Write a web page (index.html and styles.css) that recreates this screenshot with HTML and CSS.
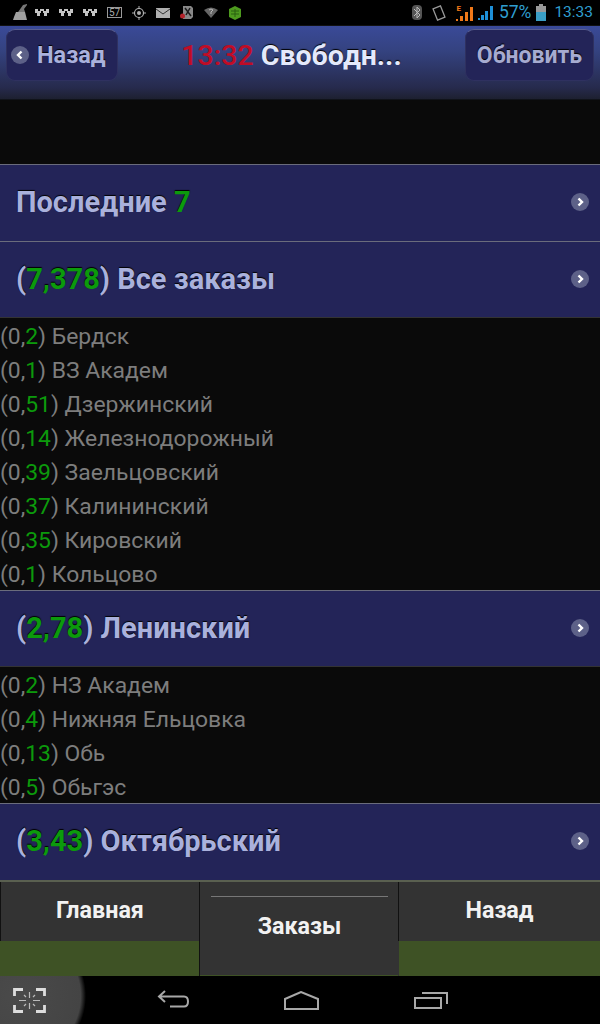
FILE: index.html
```html
<!DOCTYPE html>
<html lang="ru">
<head>
<meta charset="utf-8">
<title>Свободные заказы</title>
<link rel="stylesheet" href="styles.css">
</head>
<body>
<div class="status">
  <div class="status-left">
    <svg class="broom" width="16" height="17" viewBox="0 0 16 17"><path d="M11 1l4-1v1l-3 4 1 3-9 3z" fill="#777"/><path d="M4 8l9 0 2 8H1l1-3z" fill="#a0a0a0"/></svg>
    <svg class="taxi" width="14" height="8" viewBox="0 0 14 8"><path d="M0 0h3v2h2V0h4v2h2V0h3v4h-2v3H9V4H8V2H6v2H5v3H2V4H0z" fill="#c4c4c4"/></svg>
    <svg class="taxi" width="14" height="8" viewBox="0 0 14 8"><path d="M0 0h3v2h2V0h4v2h2V0h3v4h-2v3H9V4H8V2H6v2H5v3H2V4H0z" fill="#c4c4c4"/></svg>
    <svg class="taxi" width="14" height="8" viewBox="0 0 14 8"><path d="M0 0h3v2h2V0h4v2h2V0h3v4h-2v3H9V4H8V2H6v2H5v3H2V4H0z" fill="#c4c4c4"/></svg>
    <span class="cal">57</span>
    <svg width="14" height="14" viewBox="0 0 14 14"><circle cx="7" cy="7" r="4.500" fill="none" stroke="#b0b0b0" stroke-width="1.200"/><circle cx="7" cy="7" r="2" fill="#b0b0b0"/><path d="M7 0v3M7 11v3M0 7h3M11 7h3" stroke="#b0b0b0"/></svg>
    <svg width="14" height="10" viewBox="0 0 14 10"><rect width="14" height="10" fill="#b0b0b0"/><path d="M0 1l7 5 7-5" fill="none" stroke="#333"/></svg>
    <svg width="14" height="13" viewBox="0 0 14 13"><path d="M3 0h8l2 2v9l-2 2H3z" fill="#888"/><path d="M5 2l6 8M10 2l-4 7" stroke="#1a1a1a" stroke-width="1.500"/><circle cx="2.500" cy="10" r="2.500" fill="#b3222a"/></svg>
    <svg width="14" height="11" viewBox="0 0 14 11"><path d="M0 3q7-5 14 0L7 11z" fill="#666"/><path d="M5 3q2-2 4 0l-2 2v2" fill="none" stroke="#bbb"/></svg>
    <svg width="14" height="14" viewBox="0 0 14 14"><path d="M7 0l6 3v8l-6 3-6-3V3z" fill="#4d9a1e"/><path d="M3 5h8M3 8h8M7 3v8" stroke="#2a5e10"/></svg>
  </div>
  <div class="status-right">
    <svg width="10" height="15" viewBox="0 0 10 15"><rect width="10" height="15" rx="4" fill="#555"/><path d="M2 4l6 6-3 3V2l3 3-6 6" fill="none" stroke="#bbb"/></svg>
    <svg class="rot" width="14" height="16" viewBox="0 0 14 16"><rect x="3" y="2" width="8" height="12" fill="none" stroke="#999" stroke-width="1.300" transform="rotate(-22 7 8)"/></svg>
    <span class="sig"><span class="e">E</span><svg width="17" height="14" viewBox="0 0 17 14"><path d="M0 14h2v-2H0zM4 14h3V9H4zM9 14h3V5H9zM14 14h3V0h-3z" fill="#f07818"/></svg></span>
    <svg width="15" height="14" viewBox="0 0 15 14"><path d="M0 14h2v-2H0zM3 14h3V9H3zM7 14h3V5H7zM12 14h3V0h-3z" fill="#1e90d8"/></svg>
    <span class="pct">57%</span>
    <svg width="10" height="17" viewBox="0 0 10 17"><rect x="3" width="4" height="2" fill="#999"/><rect y="2" width="10" height="15" fill="#999"/><rect y="8" width="10" height="9" fill="#3a9ec4"/></svg>
    <span class="clock">13:33</span>
  </div>
</div>

<header class="topbar">
  <div class="btn btn-back">
    <span class="bullet"><svg width="10" height="10" viewBox="0 0 10 10"><path d="M6.500 1.500L3 5l3.500 3.500" fill="none" stroke="#fff" stroke-width="2.400"/></svg></span>
    <span>Назад</span>
  </div>
  <h1 class="title"><span class="red">13:32</span> Свободн...</h1>
  <div class="btn btn-refresh">Обновить</div>
</header>

<div class="spacer"></div>

<main class="content">
  <div class="row row-tall"><span>Последние <b>7</b></span><span class="bullet"><svg width="10" height="10" viewBox="0 0 10 10"><path d="M3.500 1.500L7 5 3.500 8.500" fill="none" stroke="#fff" stroke-width="2.400"/></svg></span></div>
  <div class="row"><span>(<b>7,378</b>) Все заказы</span><span class="bullet"><svg width="10" height="10" viewBox="0 0 10 10"><path d="M3.500 1.500L7 5 3.500 8.500" fill="none" stroke="#fff" stroke-width="2.400"/></svg></span></div>
  <ul class="list">
    <li>(0,<i>2</i>) Бердск</li>
    <li>(0,<i>1</i>) ВЗ Академ</li>
    <li>(0,<i>51</i>) Дзержинский</li>
    <li>(0,<i>14</i>) Железнодорожный</li>
    <li>(0,<i>39</i>) Заельцовский</li>
    <li>(0,<i>37</i>) Калининский</li>
    <li>(0,<i>35</i>) Кировский</li>
    <li>(0,<i>1</i>) Кольцово</li>
  </ul>
  <div class="row"><span>(<b>2,78</b>) Ленинский</span><span class="bullet"><svg width="10" height="10" viewBox="0 0 10 10"><path d="M3.500 1.500L7 5 3.500 8.500" fill="none" stroke="#fff" stroke-width="2.400"/></svg></span></div>
  <ul class="list">
    <li>(0,<i>2</i>) НЗ Академ</li>
    <li>(0,<i>4</i>) Нижняя Ельцовка</li>
    <li>(0,<i>13</i>) Обь</li>
    <li>(0,<i>5</i>) Обьгэс</li>
  </ul>
  <div class="row row-tall"><span>(<b>3,43</b>) Октябрьский</span><span class="bullet"><svg width="10" height="10" viewBox="0 0 10 10"><path d="M3.500 1.500L7 5 3.500 8.500" fill="none" stroke="#fff" stroke-width="2.400"/></svg></span></div>
</main>

<nav class="tabs">
  <div class="tab tab-first"><div class="tab-label">Главная</div><div class="tab-green"></div></div>
  <div class="tab tab-active"><div class="tab-rule"></div><div class="tab-active-label">Заказы</div></div>
  <div class="tab tab-last"><div class="tab-label">Назад</div><div class="tab-green"></div></div>
</nav>

<footer class="nav">
  <svg class="nav-shot" width="33" height="25" viewBox="0 0 33 25"><path d="M1.500 8V1.500H10M23 1.500h8.500V8M1.500 17v6.500H10M23 23.500h8.500V17" fill="none" stroke="#ddd" stroke-width="2.800"/><path d="M16.500 4v6M16.500 15v6M6 12.500h7M20 12.500h7M11 7l2 2M22 7l-2 2M11 18l2-2M22 18l-2-2" stroke="#bbb" stroke-width="1.200"/></svg>
  <svg class="nav-back" width="33" height="20" viewBox="0 0 33 20"><path d="M8 1L2 6.500 8 12M2 6.500h25q4 0 4 5t-4 5H13" fill="none" stroke="#a8a8a8" stroke-width="2"/></svg>
  <svg class="nav-home" width="35" height="19" viewBox="0 0 35 19"><path d="M1 18V8L17 1l17 7v10z" fill="none" stroke="#a8a8a8" stroke-width="2"/></svg>
  <svg class="nav-recent" width="34" height="18" viewBox="0 0 34 18"><path d="M1 7h26v10H1z" fill="none" stroke="#a8a8a8" stroke-width="2"/><path d="M8 2h25v11" fill="none" stroke="#a8a8a8" stroke-width="2"/></svg>
</footer>
</body>
</html>
```
FILE: styles.css
```css
* { box-sizing: border-box; }
html, body { margin: 0; padding: 0; }
body {
  width: 600px;
  height: 1024px;
  overflow: hidden;
  background: #0a0a0a;
  font-family: Roboto, "Liberation Sans", sans-serif;
  display: flex;
  flex-direction: column;
}
body > * { flex: none; }
svg { display: block; flex: none; }

.status {
  height: 25px;
  background: #000;
  display: flex;
  justify-content: space-between;
  align-items: center;
  padding: 0 7px 0 12px;
}
.status-left { display: flex; align-items: center; gap: 10px; }
.status-right { display: flex; align-items: center; gap: 5px; }
.broom { margin-right: -3px; }
.cal {
  width: 15px;
  height: 11px;
  border: 1px solid #999;
  color: #aaa;
  font-size: 10px;
  line-height: 9px;
  text-align: center;
}
.rot { margin-left: 5px; }
.sig { display: flex; align-items: flex-end; margin-left: 5px; }
.e {
  color: #f07818;
  font-size: 8px;
  font-weight: 700;
  line-height: 8px;
  margin: 0 -5px 8px 0;
}
.pct, .clock { color: #2f9ecf; line-height: 25px; }
.pct { font-size: 17.500px; margin-left: 1px; }
.clock { margin-left: 3px; font-size: 15.500px; }

.topbar {
  height: 75px;
  background: linear-gradient(#3a4a98 0%, #34427f 35%, #262a4c 85%, #1d2030 100%);
  display: flex;
  align-items: flex-start;
  justify-content: space-between;
  padding: 3px 6px 0 6px;
  border-top: 1px solid #111;
  border-bottom: 1px solid #10131a;
}
.btn {
  height: 52px;
  background: #232458;
  border: 1px solid #2f3160;
  border-top-color: #5a5f90;
  border-radius: 9px;
  color: #aab1dc;
  font-size: 23.500px;
  font-weight: 700;
  display: flex;
  align-items: center;
  text-shadow: 0 -1px 1px #000;
}
.btn-back { width: 112px; padding-left: 4px; gap: 8px; }
.btn-refresh { width: 129px; justify-content: center; color: #a6abd0; font-size: 23px; }
.bullet {
  width: 18px;
  height: 18px;
  border-radius: 50%;
  background: #5d6188;
  display: flex;
  align-items: center;
  justify-content: center;
  flex: none;
}
.title {
  margin: 10px 0 0 0;
  color: #e4e9fb;
  font-size: 28.500px;
  font-weight: 700;
  line-height: 34px;
  white-space: nowrap;
  text-shadow: 0 -1px 1px #000;
}
.red { color: #c00c26; font-weight: 500; text-shadow: none; }

.spacer { height: 64px; background: #0a0a0a; }

.content { display: flex; flex-direction: column; }
.row {
  height: 76px;
  flex: none;
  background: #232458;
  border-top: 1px solid #6a6c7c;
  padding: 0 11px 2px 16px;
  display: flex;
  align-items: center;
  justify-content: space-between;
  color: #aab1dc;
  font-size: 29px;
  font-weight: 700;
  text-shadow: 0 -1px 1px #000;
}
.row-tall { height: 77px; }
.row b { color: #0c9a0c; font-weight: 700; }
.list { list-style: none; margin: 0; padding: 0; border-top: 1px solid #333; flex: none; }
.list li {
  height: 34px;
  padding-top: 2px;
  line-height: 34px;
  color: #7d7d7d;
  font-size: 22.900px;
  white-space: nowrap;
}
.list i { color: #0c9a0c; font-style: normal; }

.tabs {
  height: 96px;
  display: flex;
  background: #3e5225;
  border-top: 2px solid #5a6050;
}
.tab {
  display: flex;
  flex-direction: column;
  background: #333;
}
.tab-first { flex: 0 0 200px; border-left: 1px solid #111; border-right: 1px solid #111; }
.tab-active { flex: 0 0 199px; padding: 14px 11px 0 11px; margin-bottom: 1px; }
.tab-last { flex: 1; margin-left: -1px; }
.tab-label {
  height: 59px;
  display: flex;
  align-items: center;
  justify-content: center;
  color: #f2f2f2;
  font-size: 23.300px;
  font-weight: 700;
  padding-bottom: 3px;
  flex: none;
}
.tab-last .tab-label { border-left: 1px solid #111; }
.tab-green { flex: 1; background: #3e5225; }
.tab-first .tab-green { margin-left: -1px; }
.tab-last .tab-green { margin-left: 1px; }
.tab-rule { height: 1px; background: #777; flex: none; }
.tab-active-label {
  flex: 1;
  display: flex;
  align-items: center;
  justify-content: center;
  color: #f2f2f2;
  font-size: 23.300px;
  font-weight: 700;
  padding-bottom: 20px;
}

.nav {
  height: 48px;
  background: radial-gradient(circle 68px at 18px 20px, #4a4a4a 0, #444 92%, #1a1a1a 97%, #000 100%) no-repeat, #000;
  display: flex;
  align-items: center;
  padding-left: 13px;
}
.nav-back { margin-left: 111px; }
.nav-home { margin-left: 94px; }
.nav-recent { margin-left: 95px; }
```
